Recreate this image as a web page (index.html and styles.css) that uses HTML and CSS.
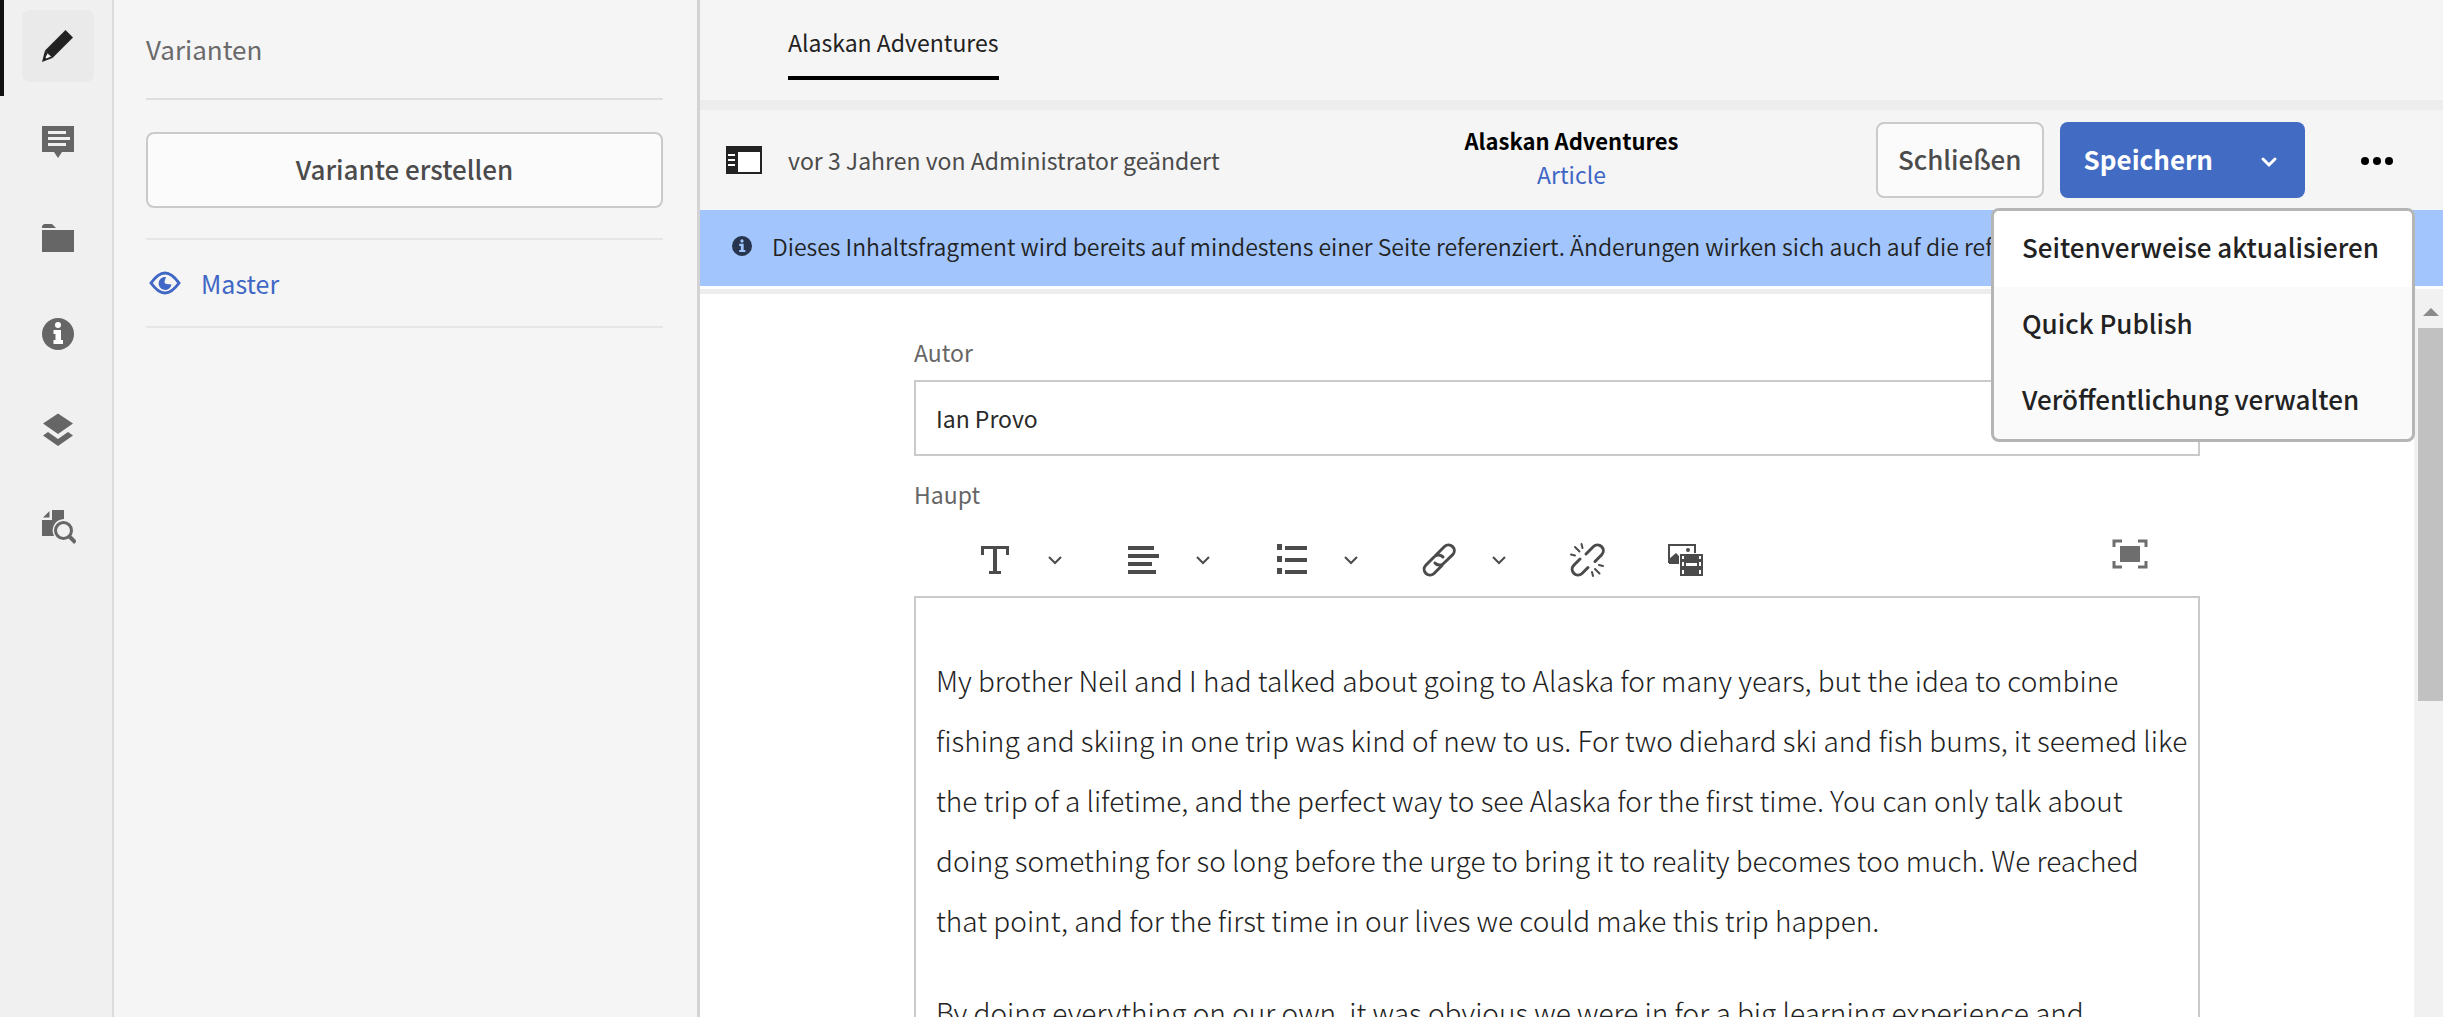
FILE: index.html
```html
<!DOCTYPE html>
<html lang="de">
<head>
<meta charset="utf-8">
<title>Alaskan Adventures</title>
<link rel="stylesheet" href="styles.css">
</head>
<body>
<nav class="rail" aria-label="Bereiche">
  <button class="rail-item is-active" aria-label="Varianten"><span class="rail-tile">
    <svg viewBox="0 0 36 36"><path fill="#222" d="M26.5 2 34 9.500 13.500 30 6 22.500z" transform="translate(-1 0)"/><path fill="#222" d="M5 22.500 12.500 30 2 34z"/><path fill="#f6f6f6" d="M7.500 25.500 11 28.500 6.500 30.500 5.500 29.500z"/></svg></span></button>
  <button class="rail-item" aria-label="Anmerkungen"><span class="rail-tile">
    <svg viewBox="0 0 36 36"><path fill="currentColor" d="M2 2h32v26H22l-4 6-4-6H2z"/><path stroke="#f0f0f0" stroke-width="3" d="M8 8.500h18M8 14.500h22M8 20.500h18"/></svg></span></button>
  <button class="rail-item" aria-label="Assets"><span class="rail-tile">
    <svg viewBox="0 0 36 36"><path fill="currentColor" d="M2 10h32v22H2zM2 8V6l2-2h8l4 4z"/></svg></span></button>
  <button class="rail-item" aria-label="Metadaten"><span class="rail-tile">
    <svg viewBox="0 0 36 36"><circle cx="18" cy="18" r="16" fill="currentColor"/><circle cx="18" cy="9" r="3" fill="#fff"/><path fill="#fff" d="M13.500 14H21v10h2v4h-9.500v-4h2v-6h-2z"/></svg></span></button>
  <button class="rail-item" aria-label="Strukturbaum"><span class="rail-tile">
    <svg viewBox="0 0 36 36"><path fill="currentColor" d="M18 1.500 33 11.500 18 22 3 11.500zM3 23.500l5-3.500 10 7 10-7 5 3.500-15 10.500z"/></svg></span></button>
  <button class="rail-item" aria-label="Vorschau"><span class="rail-tile">
    <svg viewBox="0 0 36 36"><path fill="currentColor" d="M12 2h12v9a11.500 11.500 0 0 0-10 17H2V12h10zM9.500 3v6.500H3z"/><circle cx="23.500" cy="22.500" r="8" fill="none" stroke="currentColor" stroke-width="3"/><path stroke="currentColor" stroke-width="4" d="m29 28 6.500 6.500"/></svg></span></button>
</nav>

<aside class="panel">
  <h2 class="panel-title">Varianten</h2>
  <button class="btn btn-wide">Variante erstellen</button>
  <a class="variant" href="#master">
    <svg viewBox="0 0 32 24" fill="none" stroke="currentColor"><path stroke-width="3" d="M2 12C7 5 11 2 16 2s9 3 14 10c-5 7-9 10-14 10S7 19 2 12z"/><path fill="currentColor" stroke="none" d="M17 6a6.500 6.500 0 1 0 5.500 7.500l-5-.5c-2-.3-2.500-2-1.500-4z"/></svg>
    Master</a>
</aside>

<main class="main">
  <nav class="tabs"><a class="tab" href="#fragment">Alaskan Adventures</a></nav>

  <header class="toolbar">
    <div class="status">
      <button class="icon-btn" aria-label="Seitenleiste umschalten"><svg viewBox="0 0 36 28"><path fill="#fff" stroke="#222" stroke-width="2" d="M1 1h34v26H1z"/><path fill="#222" d="M0 0h36v6H0zM0 5h12v23H0z"/><path stroke="#fff" stroke-width="2" d="M2 9h7M2 14h7M2 19h7"/></svg></button>
      <span>vor 3 Jahren von Administrator geändert</span>
    </div>
    <div class="heading">
      <h1>Alaskan Adventures</h1>
      <a href="#model">Article</a>
    </div>
    <div class="actions">
      <button class="btn">Schließen</button>
      <div class="split">
        <button class="split-main">Speichern</button>
        <button class="split-caret" aria-label="Weitere Speicheroptionen"><svg viewBox="0 0 18 12"><path fill="none" stroke="currentColor" stroke-width="3" stroke-linecap="round" d="m3 3 6 6 6-6"/></svg></button>
      </div>
      <button class="more" aria-label="Mehr"><svg viewBox="0 0 32 8" fill="#000"><circle cx="4" cy="4" r="4"/><circle cx="16" cy="4" r="4"/><circle cx="28" cy="4" r="4"/></svg></button>
    </div>
    <div class="menu" role="menu">
      <button role="menuitem" class="is-hover">Seitenverweise aktualisieren</button>
      <button role="menuitem">Quick Publish</button>
      <button role="menuitem">Veröffentlichung verwalten</button>
    </div>
  </header>

  <p class="banner">
    <svg viewBox="0 0 36 36"><circle cx="18" cy="18" r="18" fill="#26344d"/><circle cx="18" cy="9" r="3" fill="#a1c5fc"/><path fill="#a1c5fc" d="M13 14h8v11h3v4H13v-4h3v-7h-3z"/></svg>
    <span>Dieses Inhaltsfragment wird bereits auf mindestens einer Seite referenziert. Änderungen wirken sich auch auf die ref</span>
  </p>

  <div class="scroller">
    <form class="form">
      <label class="label" for="autor">Autor</label>
      <input class="input" id="autor" type="text" value="Ian Provo">
      <span class="label" id="haupt">Haupt</span>
      <div class="rte" role="toolbar" aria-label="Textformatierung">
        <div class="rte-group">
          <button type="button" aria-label="Format"><svg viewBox="0 0 36 36"><path fill="currentColor" d="M4 4h28v9h-3V7H20v22h4v3H12v-3h4V7H7v6H4z"/></svg></button>
          <button type="button" aria-label="Formatoptionen"><svg class="caret" viewBox="0 0 16 10"><path fill="none" stroke="currentColor" stroke-width="2" d="m2 2 6 6 6-6"/></svg></button>
        </div>
        <div class="rte-group">
          <button type="button" aria-label="Ausrichtung"><svg viewBox="0 0 36 36"><path stroke="currentColor" stroke-width="4" d="M3 6h26M3 14h31M3 22h24M3 30h28"/></svg></button>
          <button type="button" aria-label="Ausrichtungsoptionen"><svg class="caret" viewBox="0 0 16 10"><path fill="none" stroke="currentColor" stroke-width="2" d="m2 2 6 6 6-6"/></svg></button>
        </div>
        <div class="rte-group">
          <button type="button" aria-label="Liste"><svg viewBox="0 0 36 36"><path stroke="currentColor" stroke-width="4" d="M12 6h22M12 18h22M12 30h22"/><path fill="currentColor" d="M4 2h5v6H4zM4 14h5v6H4zM4 26h5v6H4z"/></svg></button>
          <button type="button" aria-label="Listenoptionen"><svg class="caret" viewBox="0 0 16 10"><path fill="none" stroke="currentColor" stroke-width="2" d="m2 2 6 6 6-6"/></svg></button>
        </div>
        <div class="rte-group">
          <button type="button" aria-label="Link"><svg viewBox="0 0 36 36"><g fill="none" stroke="currentColor" stroke-width="3" stroke-linecap="round"><path d="M15 13l8.500-8.500a5.800 5.800 0 0 1 8.200 8.200L22.500 21.500a5.800 5.800 0 0 1-8.500-.5"/><path d="M21 23.500l-8 8a5.800 5.800 0 0 1-8.200-8.200L13.500 14.500a5.800 5.800 0 0 1 8.500.5"/></g></svg></button>
          <button type="button" aria-label="Linkoptionen"><svg class="caret" viewBox="0 0 16 10"><path fill="none" stroke="currentColor" stroke-width="2" d="m2 2 6 6 6-6"/></svg></button>
        </div>
        <button type="button" class="unlink" aria-label="Link entfernen"><svg viewBox="0 0 36 36"><g fill="none" stroke="currentColor" stroke-width="3" stroke-linecap="round"><path d="M17 12l7.500-7.500a5.800 5.800 0 0 1 8.200 8.200L26 19.500"/><path d="M19 25.500l-6 6a5.800 5.800 0 0 1-8.200-8.200L11 17"/><path stroke-width="2" d="M2 12.500l4 1M6 5l4.500 4.500M12.500 2l1 4M34 24l-4-1M30.500 31.500 26 27M24 34l-1-4"/></g></svg></button>
        <button type="button" aria-label="Asset einfügen"><svg viewBox="0 0 36 36"><path fill="none" stroke="currentColor" stroke-width="2" d="M11 20H2V3h26v8"/><circle cx="21" cy="8" r="2" fill="currentColor"/><path fill="currentColor" d="M2 17l7-6 3 3v8H2zM13 12h23v22H13z"/><path fill="#fff" d="M19 21h11v3H19zM15 14h2v3h-2zM15 20h2v4h-2zM15 28h2v4h-2zM32 14h2v3h-2zM32 20h2v4h-2zM32 28h2v4h-2z"/></svg></button>
        <button type="button" class="fullscreen" aria-label="Vollbild"><svg viewBox="0 0 36 36"><path fill="none" stroke="currentColor" stroke-width="3" d="M2 11V5h8M26 5h8v6M34 25v6h-8M10 31H2v-6"/><path fill="currentColor" d="M8 10h20v16H8z"/></svg></button>
      </div>
      <div class="editor" contenteditable="true" role="textbox" aria-labelledby="haupt" spellcheck="false">
        <p>My brother Neil and I had talked about going to Alaska for many years, but the idea to combine fishing and skiing in one trip was kind of new to us. For two diehard ski and fish bums, it seemed like the trip of a lifetime, and the perfect way to see Alaska for the first time. You can only talk about doing something for so long before the urge to bring it to reality becomes too much. We reached that point, and for the first time in our lives we could make this trip happen.</p>
        <p>By doing everything on our own, it was obvious we were in for a big learning experience and</p>
      </div>
    </form>
    <div class="scrollbar" aria-hidden="true"><span class="scroll-up"></span><span class="scroll-thumb"></span></div>
  </div>
</main>
</body>
</html>
```
FILE: styles.css
```css
*, *::before, *::after { box-sizing: border-box; }

body {
  margin: 0;
  display: flex;
  height: 100vh;
  overflow: hidden;
  background: #f5f5f5;
  color: #4b4b4b;
  font: 400 23px/32px "Noto Sans CJK SC", "Open Sans", sans-serif;
}

button { font: inherit; color: inherit; margin: 0; padding: 0; border: 0; background: none; cursor: pointer; }
a { color: #4067c5; text-decoration: none; }
h1, h2, p { margin: 0; }
svg { display: block; flex: none; }

/* Icon rail */
.rail { flex: none; width: 114px; background: #f0f0f0; border-right: 2px solid #dcdcdc; }
.rail-item { display: block; width: 100%; height: 96px; padding: 10px 18px 14px; border-left: 4px solid transparent; color: #666; }
.rail-item.is-active { border-left-color: #111; }
.rail-tile { display: grid; place-items: center; height: 72px; border-radius: 8px; }
.is-active .rail-tile { background: #eaeaea; }
.rail-tile svg { width: 36px; height: 36px; }

/* Variants panel */
.panel { flex: none; width: 586px; padding: 0 34px 0 32px; border-right: 3px solid #d3d3d3; }
.panel-title { height: 100px; border-bottom: 2px solid #dedede; font-size: 26px; font-weight: 400; line-height: 98px; color: #6a6a6a; }
.btn { height: 76px; padding: 0 20px 2px; border: 2px solid #cacaca; border-radius: 8px; background: #fbfbfb; font-size: 26px; font-weight: 500; }
.btn-wide { display: block; width: 100%; margin: 32px 0 30px; }
.variant { display: flex; align-items: center; gap: 20px; height: 90px; padding-left: 3px; border: solid #e6e6e6; border-width: 2px 0; font-size: 25px; }
.variant svg { width: 32px; height: 24px; }

/* Main column */
.main { flex: 1; min-width: 0; display: flex; flex-direction: column; }
.tabs { flex: none; height: 110px; padding: 26px 88px 0; border-bottom: 10px solid #ededed; }
.tab { display: inline-block; padding-bottom: 20px; border-bottom: 4px solid #000; line-height: 28px; color: #222; }

.toolbar { position: relative; flex: none; display: grid; grid-template-columns: 1fr auto 1fr; align-items: center; height: 100px; padding: 0 26px; }
.status { display: flex; align-items: center; gap: 26px; white-space: nowrap; }
.icon-btn svg { width: 36px; height: 28px; }
.heading { padding-bottom: 6px; text-align: center; line-height: 34px; }
.heading h1 { font-size: 22px; font-weight: 700; line-height: 34px; color: #000; }
.actions { display: flex; align-items: center; justify-content: flex-end; gap: 16px; }
.split { display: flex; height: 76px; border-radius: 8px; background: #426bc4; color: #fff; }
.split-main { padding: 0 20px 2px 24px; font-size: 26px; font-weight: 700; }
.split-caret { display: grid; place-items: center; width: 72px; padding-top: 4px; }
.split-caret svg { width: 18px; height: 12px; }
.more { display: grid; place-items: center; width: 48px; height: 48px; margin: 2px 16px 0 32px; }
.more svg { width: 32px; height: 8px; }

.menu { position: absolute; z-index: 1; top: 98px; right: 28px; display: flex; flex-direction: column; width: 424px; border: 3px solid #b5b5b5; border-radius: 8px; background: #fafafa; overflow: hidden; }
.menu button { height: 76px; padding: 0 28px 4px; text-align: left; font-size: 26px; font-weight: 500; color: #222; white-space: nowrap; }
.menu .is-hover { background: #fff; }

.banner { flex: none; display: flex; align-items: center; gap: 20px; height: 76px; padding: 0 0 4px 32px; background: #a1c5fc; font-weight: 350; color: #222; white-space: nowrap; }
.banner svg { width: 20px; height: 20px; }

/* Content */
.scroller { flex: 1; min-height: 0; display: flex; overflow: hidden; border-top: 3px solid #fdfdfd; background: #fff; }
.form { flex: 1; height: max-content; padding: 42px 214px 0; border-top: 5px solid #ededed; }
.label { display: block; color: #666; }
.input { display: block; width: 100%; height: 76px; margin: 12px 0 22px; padding: 0 20px; border: 2px solid #cacaca; background: #fff; font: inherit; color: #2a2a2a; }
.rte { display: flex; align-items: center; height: 72px; margin-top: 14px; padding: 0 50px 0 61px; color: #4b4b4b; }
.rte button { display: grid; place-items: center; width: 40px; height: 40px; }
.rte svg { width: 36px; height: 36px; }
.rte .caret { width: 16px; height: 10px; }
.rte-group { display: flex; gap: 20px; margin-right: 48px; }
.rte .unlink { margin-right: 58px; }
.rte .fullscreen { margin: 0 0 12px auto; color: #6e6e6e; }
.editor { padding: 52px 8px 0 20px; border: 2px solid #cacaca; font-size: 28px; font-weight: 300; line-height: 60px; color: #222; }
.editor p { margin-bottom: 32px; }

.scrollbar { flex: none; width: 29px; padding-left: 4px; background: #f1f1f1; }
.scroll-up { display: block; width: 0; height: 0; margin: 19px 5px 12px; border: solid transparent; border-width: 0 8px 8px; border-bottom-color: #8a8a8a; }
.scroll-thumb { display: block; height: 373px; background: #c1c1c1; }
```
